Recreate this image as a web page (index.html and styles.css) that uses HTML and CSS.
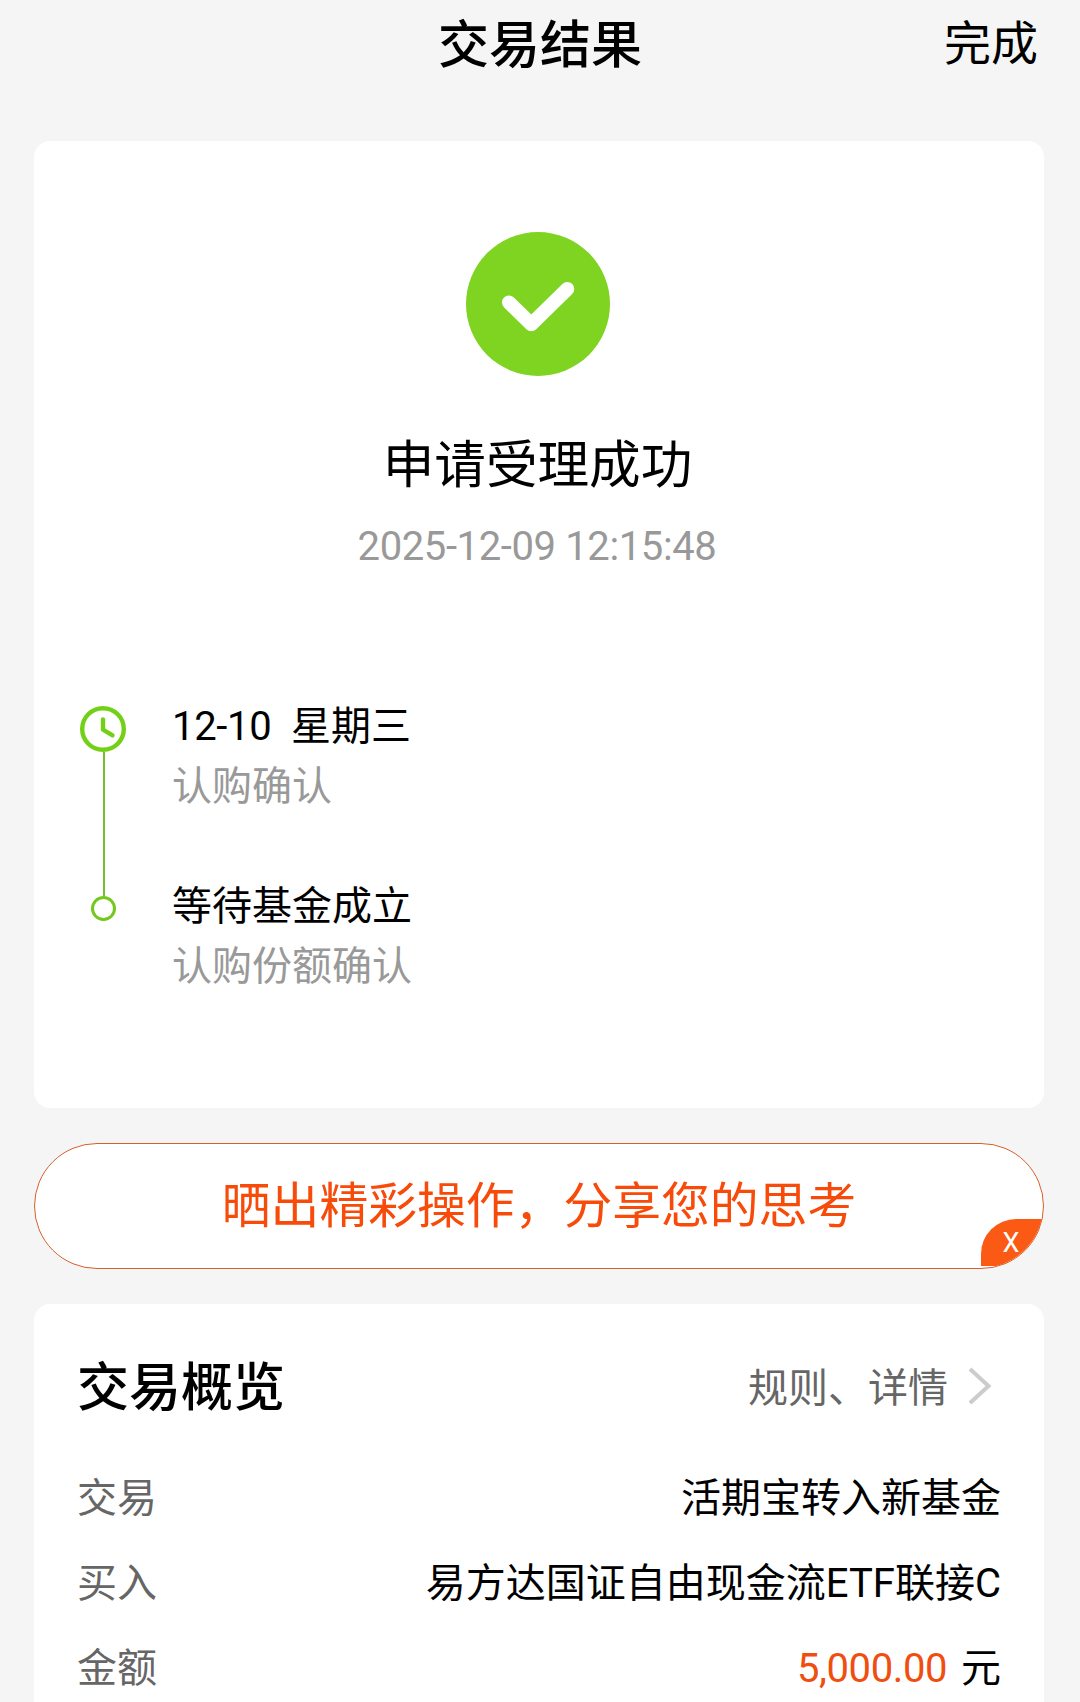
FILE: index.html
```html
<!DOCTYPE html>
<html lang="zh-CN">

<head>
  <meta charset="utf-8" />
  <title>交易结果</title>
  <meta name="viewport" content="width=device-width, initial-scale=1">
  <link rel="stylesheet" href="styles.css">
</head>

<body>
  <header class="topbar">
    <span></span>
    <h1>交易结果</h1>
    <a class="done">完成</a>
  </header>

  <main class="content">
    <!-- ========== RESULT ========== -->
    <section class="card result">
      <svg class="success-icon" viewBox="0 0 144 144">
        <circle cx="72" cy="72" r="72" fill="#7ed421" />
        <path d="M43 70.5 65.3 92.2 101.3 57" fill="none" stroke="#fff" stroke-width="14" stroke-linecap="round" stroke-linejoin="round" />
      </svg>
      <h2>申请受理成功</h2>
      <p class="time">2025-12-09 12:15:48</p>

      <ol class="steps">
        <li class="step">
          <div class="marker">
            <svg class="clock" viewBox="0 0 46 46" fill="none" stroke="#72d116" stroke-width="4.4">
              <circle cx="23" cy="23" r="20.8" />
              <path d="M23 13.5v10.2l9.5 5.6" stroke-linecap="round" stroke-linejoin="round" />
            </svg>
            <span class="line"></span>
          </div>
          <div class="step-text">
            <p class="step-title"><span class="date">12-10&nbsp;</span> 星期三</p>
            <p class="step-desc">认购确认</p>
          </div>
        </li>
        <li class="step">
          <div class="marker">
            <span class="dot"></span>
          </div>
          <div class="step-text">
            <p class="step-title">等待基金成立</p>
            <p class="step-desc">认购份额确认</p>
          </div>
        </li>
      </ol>
    </section>

    <!-- ========== SHARE ========== -->
    <div class="share">
      <span>晒出精彩操作，分享您的思考</span>
      <span class="share-close">X</span>
    </div>

    <!-- ========== OVERVIEW ========== -->
    <section class="card overview">
      <div class="overview-head">
        <h2>交易概览</h2>
        <a class="rules">规则、详情
          <svg class="arrow" viewBox="0 0 24 38">
            <path d="M2 2 20.5 19 2 36" fill="none" stroke="#ccc" stroke-width="4" />
          </svg>
        </a>
      </div>
      <dl>
        <div class="row">
          <dt>交易</dt>
          <dd>活期宝转入新基金</dd>
        </div>
        <div class="row">
          <dt>买入</dt>
          <dd>易方达国证自由现金流ETF联接C</dd>
        </div>
        <div class="row">
          <dt>金额</dt>
          <dd><span class="amount">5,000.00</span> 元</dd>
        </div>
      </dl>
    </section>
  </main>
</body>
</html>
```
FILE: styles.css
```css
* {
  box-sizing: border-box;
  margin: 0;
  padding: 0
}

body {
  font-family: Roboto, "Noto Sans CJK SC", sans-serif;
  font-size: 40px;
  line-height: 60px;
  color: #000;
  background: #f5f5f5;
  height: 1702px;
  overflow: hidden
}

/* ===== HEADER ===== */
.topbar {
  display: grid;
  grid-template-columns: 1fr auto 1fr;
  align-items: center;
  height: 88px;
  padding: 3px 42px 0
}

.topbar h1 {
  font-size: 51px;
  font-weight: 500
}

.done {
  font-size: 47px;
  text-align: right;
  padding-bottom: 3px
}

/* ===== CARDS ===== */
.content {
  display: flex;
  flex-direction: column;
  gap: 35px;
  padding: 53px 36px 0 34px
}

.card {
  background: #fff;
  border-radius: 16px
}

.result {
  display: flex;
  flex-direction: column;
  align-items: center;
  height: 967px;
  padding: 91px 46px 0
}

.success-icon {
  width: 144px;
  height: 144px;
  margin-right: 2px
}

.result h2 {
  font-size: 51.6px;
  font-weight: 400;
  margin-top: 60px;
  margin-right: 3px
}

.time {
  color: #999;
  letter-spacing: -.38px;
  margin-top: 21px;
  margin-right: 4px
}

/* ===== STEPS ===== */
.steps {
  align-self: stretch;
  list-style: none;
  margin-top: 119px
}

.step {
  display: flex;
  gap: 46px;
  height: 180px
}

.marker {
  display: flex;
  flex-direction: column;
  align-items: center;
  width: 46px;
  padding-top: 10px
}

.clock {
  width: 46px;
  height: 46px;
  flex: none
}

.line {
  width: 2px;
  height: 144px;
  margin-left: 2px;
  background: #73c02c;
  flex: none
}

.dot {
  width: 25px;
  height: 25px;
  margin: 10px 0 0 1px;
  border: 3px solid #72c91c;
  border-radius: 50%
}

.step-text {
  padding-top: 1px
}

.step-desc {
  color: #999
}

.date {
  letter-spacing: -.3px
}

/* ===== SHARE BUTTON ===== */
.share {
  position: relative;
  display: flex;
  align-items: center;
  justify-content: center;
  height: 126px;
  padding-top: 2px;
  font-size: 48.8px;
  color: #f84a08;
  background: #fff;
  border: 1px solid #d85f2c;
  border-radius: 63px;
  overflow: hidden
}

.share-close {
  position: absolute;
  right: 0;
  bottom: 2px;
  width: 62px;
  height: 47px;
  padding-right: 2px;
  font-size: 27px;
  line-height: 49px;
  text-align: center;
  color: #fff;
  background: #fb5a14;
  border-top-left-radius: 35px
}

/* ===== OVERVIEW ===== */
.overview {
  height: 460px;
  padding: 55px 43px 0 43px
}

.overview-head {
  display: flex;
  justify-content: space-between;
  align-items: center;
  margin-bottom: 37px
}

.overview-head h2 {
  font-size: 52px;
  font-weight: 500
}

.rules {
  display: flex;
  align-items: center;
  gap: 20px;
  padding-right: 9px;
  color: #666
}

.arrow {
  width: 24px;
  height: 38px;
  margin-bottom: 6px
}

.row {
  display: flex;
  justify-content: space-between;
  line-height: 85px
}

.row dt {
  color: #666
}

.amount {
  color: #f04e10;
  letter-spacing: -.4px;
  margin-right: 4px
}
```
